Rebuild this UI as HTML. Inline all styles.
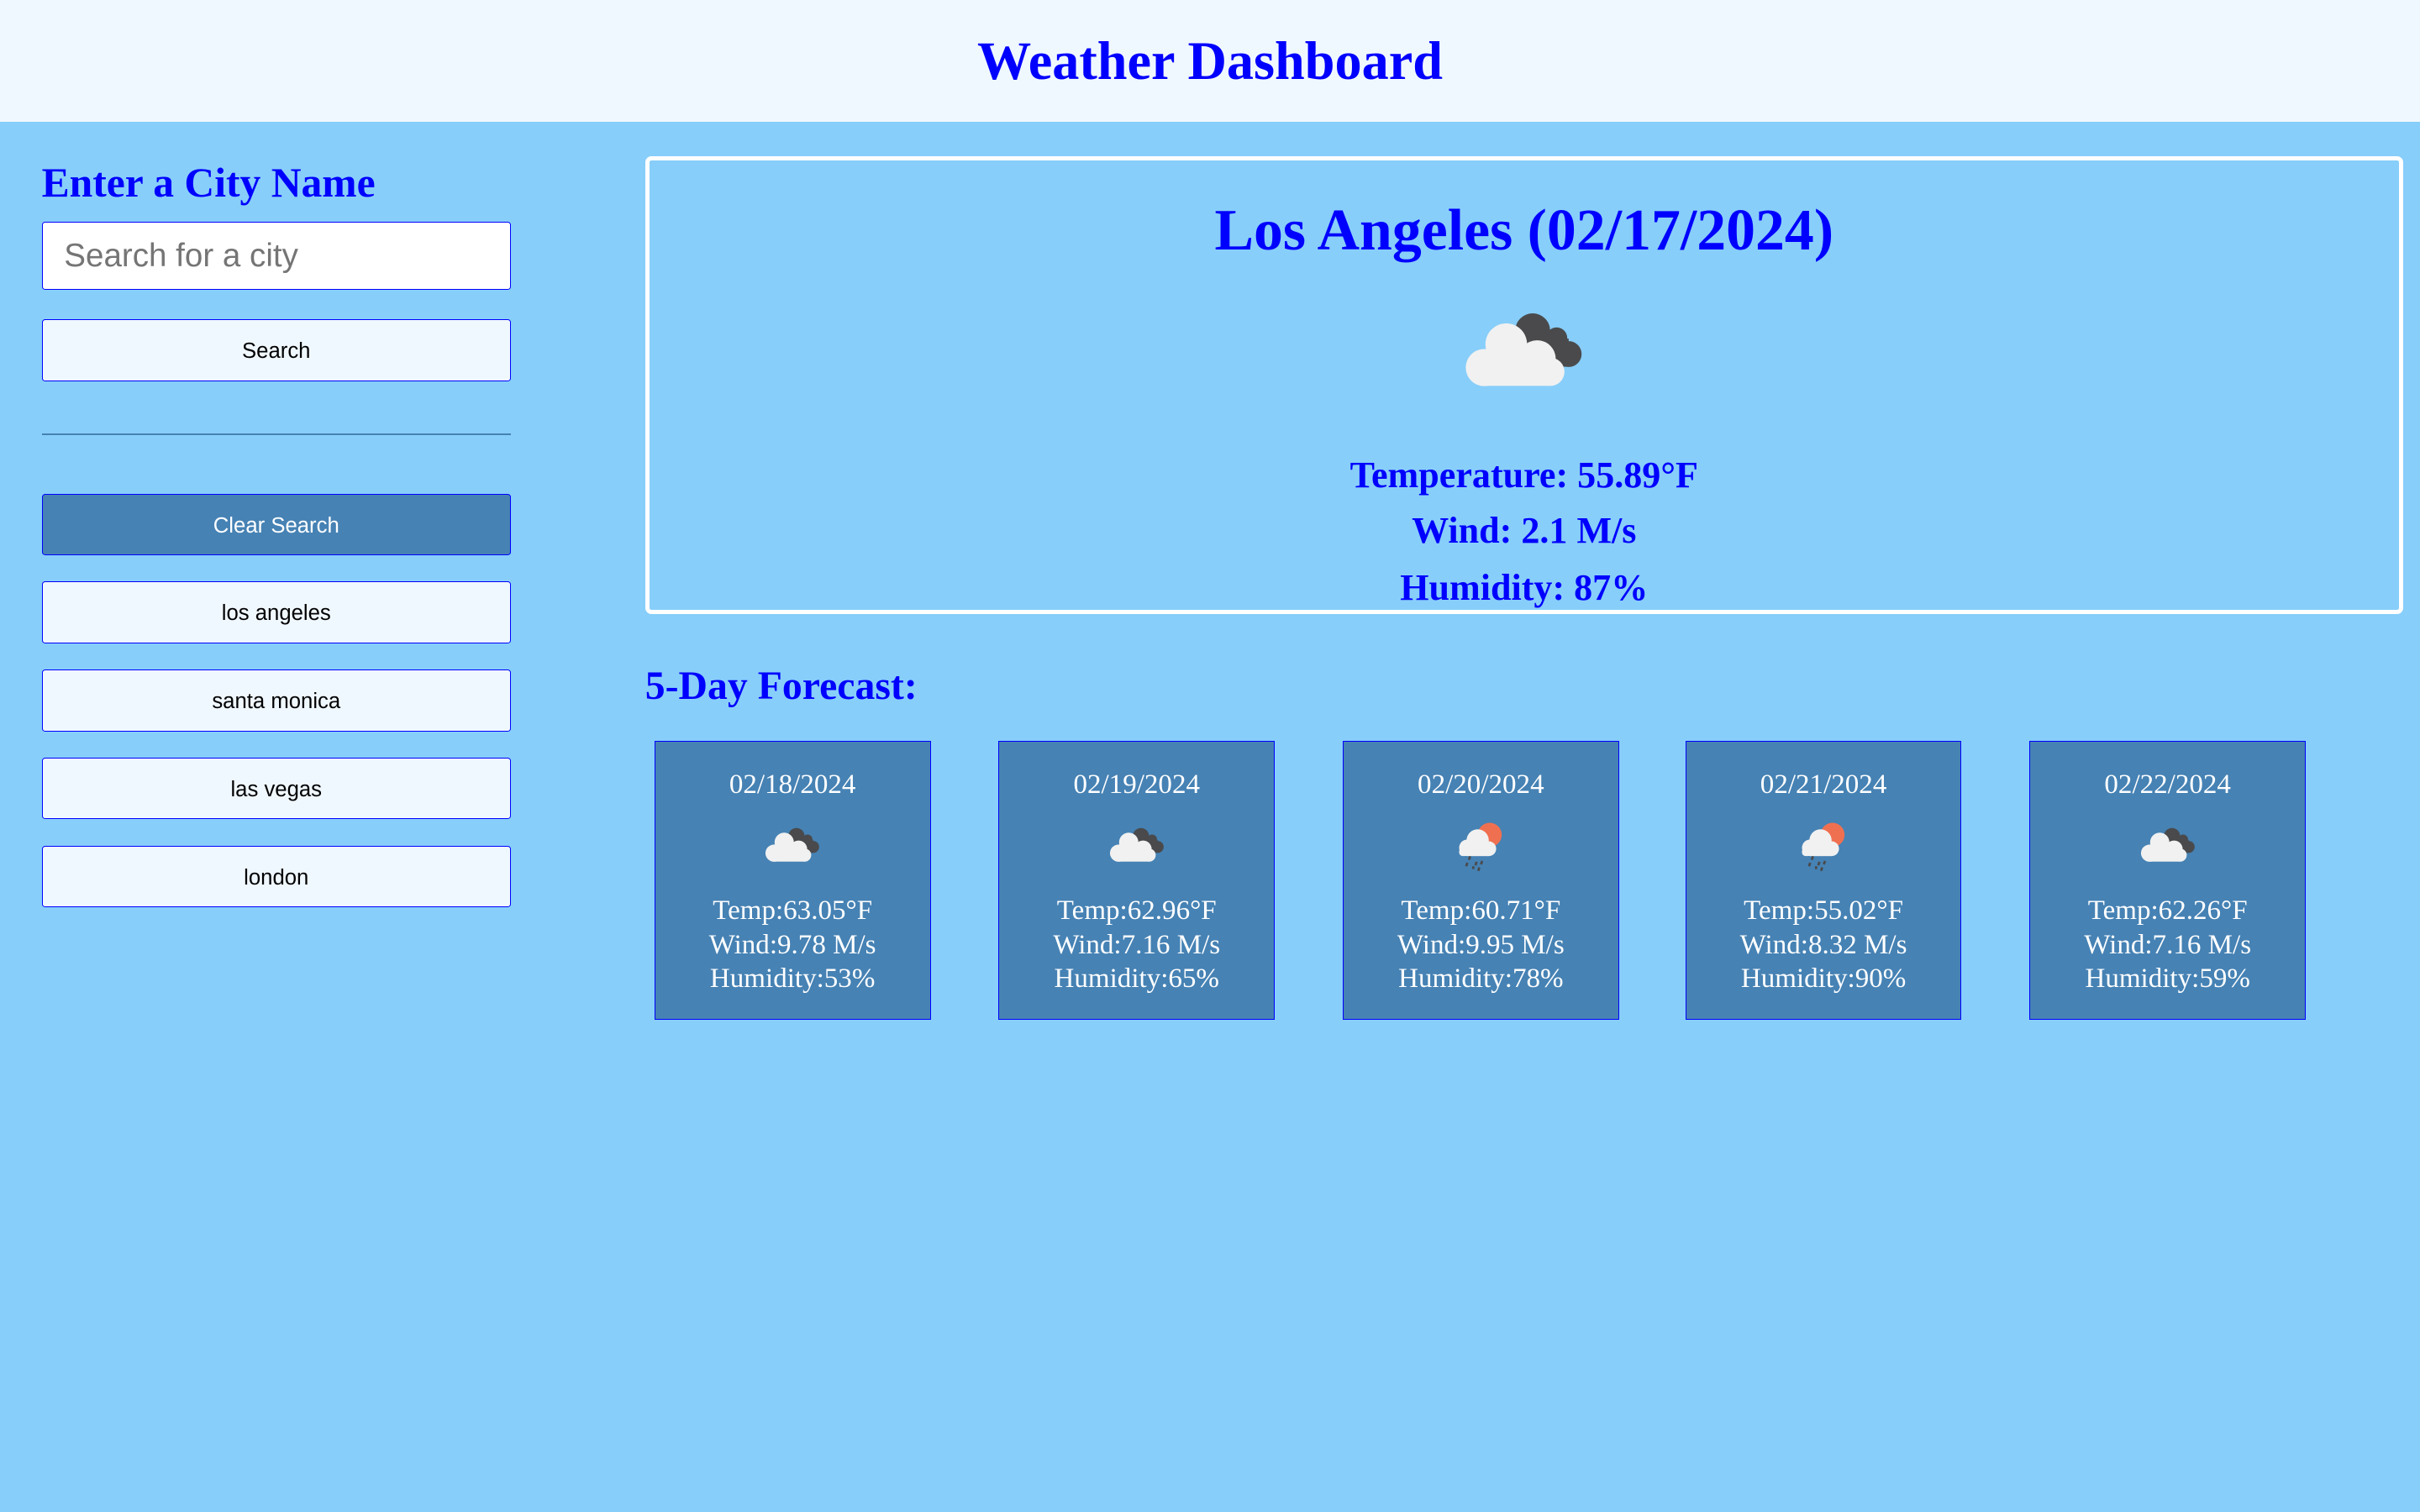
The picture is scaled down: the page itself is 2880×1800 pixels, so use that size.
<!DOCTYPE html>
<html><head><meta charset="utf-8"><style>
html,body{margin:0;padding:0;}
body{width:1568px;height:980px;zoom:1.836735;background:#87cefa;position:relative;overflow:hidden;font-family:"Liberation Serif",serif;}
.a{position:absolute;}
.hdr{left:0;top:0;width:1568px;height:79px;background:#f0f8ff;}
.t{color:#0000ff;font-weight:bold;white-space:nowrap;}
.c{text-align:center;}
.box{border:1px solid #0000ff;border-radius:2px;box-sizing:border-box;font-family:"Liberation Sans",sans-serif;font-size:14px;text-align:center;}
.btn{left:27px;width:304px;height:40px;background:#f0f8ff;color:#000;line-height:41px;}
.card{width:179px;height:181px;top:480px;background:#4682b4;border:1px solid #0000ff;box-sizing:border-box;color:#fff;font-size:18px;text-align:center;}
.card .d{position:absolute;left:0;right:0;top:17px;line-height:22px;}
.card .i{position:absolute;top:54px;}
.card .x{position:absolute;left:0;right:0;top:99px;line-height:22px;}
</style></head><body>
<svg width="0" height="0" style="position:absolute">
<defs>
<symbol id="cl" viewBox="120 80 450 300">
<g fill="#4a4a4c"><circle cx="377" cy="162" r="62"/><circle cx="462" cy="188" r="38"/><circle cx="505" cy="245" r="46"/><rect x="330" y="190" width="175" height="100"/></g>
<g fill="#f1f1f1"><circle cx="205" cy="293" r="66"/><circle cx="283" cy="210" r="74"/><circle cx="393" cy="262" r="66"/><circle cx="440" cy="308" r="50"/><rect x="205" y="250" width="235" height="108"/></g>
</symbol>
<symbol id="rn" viewBox="0 0 60 60">
<circle cx="38" cy="18" r="13" fill="#ef7050"/>
<g fill="#f1f1f1"><circle cx="14" cy="32" r="9"/><circle cx="25" cy="24" r="12"/><circle cx="37" cy="33" r="8"/><rect x="14" y="28" width="23" height="13"/><rect x="5" y="32" width="10" height="9" rx="4"/></g>
<g fill="#4a4a4c"><rect x="15" y="41" width="2.5" height="4" transform="rotate(20 16 43)"/><rect x="12" y="48" width="2.5" height="4" transform="rotate(20 13 50)"/><rect x="22" y="47" width="2.5" height="4" transform="rotate(20 23 49)"/><rect x="28" y="46" width="2.5" height="4" transform="rotate(20 29 48)"/><rect x="19" y="52" width="2.5" height="3"/><rect x="25" y="53" width="2.5" height="4" transform="rotate(20 26 55)"/></g>
</symbol>
</defs></svg>

<div class="a hdr"></div>
<div class="a t c" style="left:0;width:1568px;top:18px;font-size:35px;line-height:44px;">Weather Dashboard</div>

<div class="a t" style="left:27px;top:102px;font-size:27px;line-height:34px;">Enter a City Name</div>
<div class="a box" style="left:27px;top:144px;width:304px;height:44px;background:#fff;text-align:left;padding-left:14px;font-size:21px;line-height:44px;color:#757575;">Search for a city</div>
<div class="a box btn" style="top:207px;">Search</div>
<div class="a" style="left:27px;top:281px;width:304px;height:1px;background:#4682b4;"></div>
<div class="a box btn" style="top:320px;background:#4682b4;color:#fff;">Clear Search</div>
<div class="a box btn" style="top:377px;">los angeles</div>
<div class="a box btn" style="top:434px;">santa monica</div>
<div class="a box btn" style="top:491px;">las vegas</div>
<div class="a box btn" style="top:548px;">london</div>

<div class="a" style="left:418px;top:101px;width:1139px;height:297px;border:3px solid #fff;border-radius:4px;box-sizing:border-box;"></div>
<div class="a t c" style="left:418px;width:1139px;top:127px;font-size:38px;line-height:46px;">Los Angeles (02/17/2024)</div>
<svg class="a" style="left:946px;top:199px" width="82" height="55"><use href="#cl"/></svg>
<div class="a t c" style="left:418px;width:1139px;top:293px;font-size:24px;line-height:30px;">Temperature: 55.89°F</div>
<div class="a t c" style="left:418px;width:1139px;top:329px;font-size:24px;line-height:30px;">Wind: 2.1 M/s</div>
<div class="a t c" style="left:418px;width:1139px;top:366px;font-size:24px;line-height:30px;">Humidity: 87%</div>

<div class="a t" style="left:418px;top:429px;font-size:26px;line-height:32px;">5-Day Forecast:</div>

<div class="a card" style="left:424px;"><div class="d">02/18/2024</div><svg class="i" style="left:70px" width="38" height="26"><use href="#cl"/></svg><div class="x">Temp:63.05°F<br>Wind:9.78 M/s<br>Humidity:53%</div></div>
<div class="a card" style="left:647px;"><div class="d">02/19/2024</div><svg class="i" style="left:70px" width="38" height="26"><use href="#cl"/></svg><div class="x">Temp:62.96°F<br>Wind:7.16 M/s<br>Humidity:65%</div></div>
<div class="a card" style="left:870px;"><div class="d">02/20/2024</div><svg class="i" style="left:72px;top:50px" width="36" height="36"><use href="#rn"/></svg><div class="x">Temp:60.71°F<br>Wind:9.95 M/s<br>Humidity:78%</div></div>
<div class="a card" style="left:1092px;"><div class="d">02/21/2024</div><svg class="i" style="left:72px;top:50px" width="36" height="36"><use href="#rn"/></svg><div class="x">Temp:55.02°F<br>Wind:8.32 M/s<br>Humidity:90%</div></div>
<div class="a card" style="left:1315px;"><div class="d">02/22/2024</div><svg class="i" style="left:70px" width="38" height="26"><use href="#cl"/></svg><div class="x">Temp:62.26°F<br>Wind:7.16 M/s<br>Humidity:59%</div></div>
</body></html>
